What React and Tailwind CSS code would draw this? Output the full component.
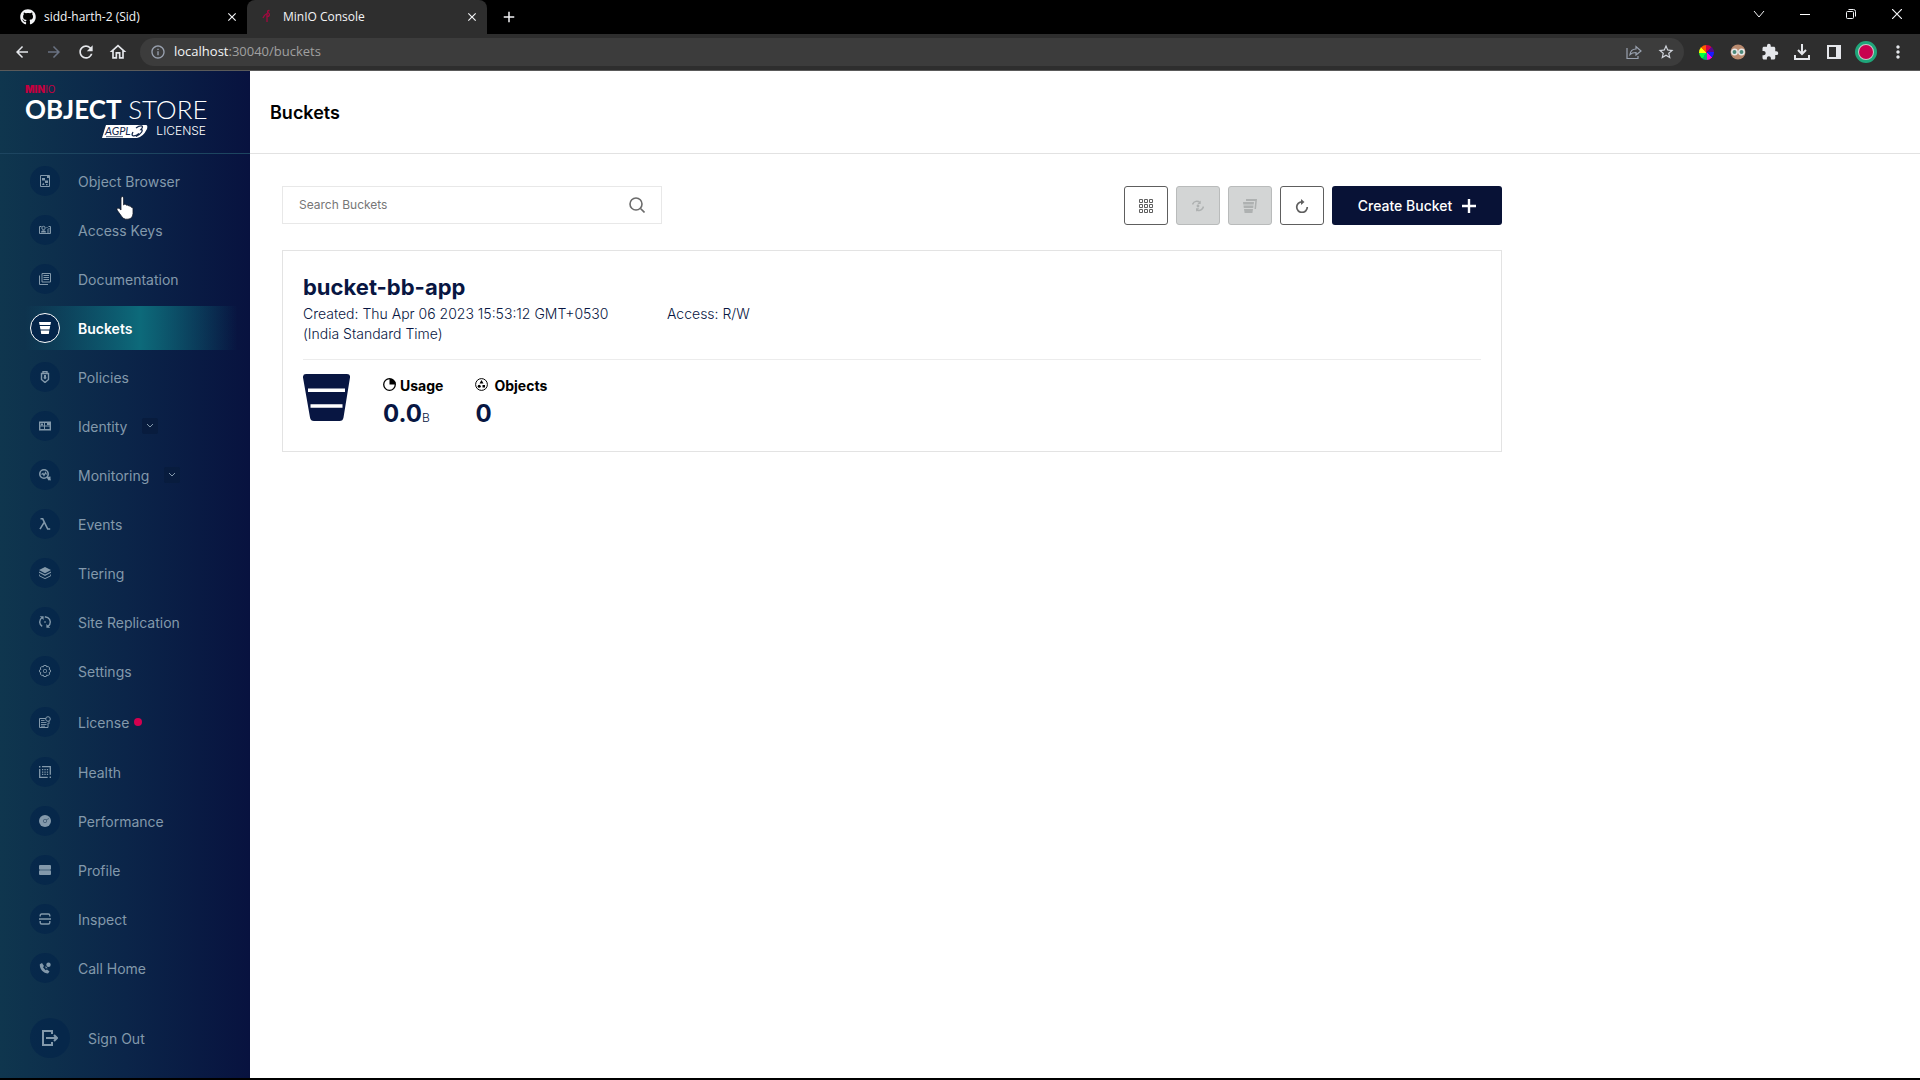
import clsx from 'clsx'
import { FaGithub } from 'react-icons/fa'
import {
  MdArrowBack,
  MdArrowForward,
  MdRefresh,
  MdOutlineHome,
  MdOutlineInfo,
  MdStarBorder,
  MdExtension,
  MdMoreVert,
  MdClose,
  MdAdd,
} from 'react-icons/md'

const navItems = [
  { label: 'Object Browser', icon: 'browser' },
  { label: 'Access Keys', icon: 'keys' },
  { label: 'Documentation', icon: 'docs' },
  { label: 'Buckets', icon: 'bucket', active: true },
  { label: 'Policies', icon: 'policy' },
  { label: 'Identity', icon: 'identity', expandable: true },
  { label: 'Monitoring', icon: 'monitoring', expandable: true },
  { label: 'Events', icon: 'lambda' },
  { label: 'Tiering', icon: 'tiers' },
  { label: 'Site Replication', icon: 'replication' },
  { label: 'Settings', icon: 'settings' },
  { label: 'License', icon: 'license', badge: true },
  { label: 'Health', icon: 'health' },
  { label: 'Performance', icon: 'performance' },
  { label: 'Profile', icon: 'profile' },
  { label: 'Inspect', icon: 'inspect' },
  { label: 'Call Home', icon: 'call' },
]

// all nav glyphs are drawn on a 12x12 grid
const glyphs = {
  browser: (
    <>
      <path d="M1.500.5h9v11h-9z" fill="none" stroke="currentColor" />
      <path d="M3 3h3v2.500H3zM8 1h2v2H8zM6 5.500h3v2.500H6zM3 10l1.300-2.500L5.600 10zM7 9h1.500v1.200H7z" />
    </>
  ),
  keys: (
    <>
      <path d="M2.500 2.500h-2v7h11v-7h-2" fill="none" stroke="currentColor" />
      <circle cx="4.500" cy="4" r="1.700" fill="none" stroke="currentColor" />
      <path d="M2 8.500c0-3 5-3 5 0zM7.500 3h1v1h-1zM9.500 4h1v1h-1zM8 5.500h2.500v1H8zM8 7.500h2.500v1H8z" />
    </>
  ),
  docs: (
    <>
      <path d="M3 .5h8.500v8.500H3zM.5 2.500v9H9" fill="none" stroke="currentColor" />
      <path d="M4.500 2.500h5.500M4.500 4.500h5.500M4.500 6.500h5.500" stroke="currentColor" />
    </>
  ),
  bucket: <path d="M0 0h12l-.6 3H.6zM.8 4h10.400l-.7 3.500H1.500zM1.700 8.500h8.600L9.800 12H2.200z" />,
  policy: (
    <>
      <path d="M4 2V.6h4V2M2.500 2.500h7v6L6 11.500 2.500 8.500z" fill="none" stroke="currentColor" strokeWidth="1.400" />
      <path d="M5 4h2v1.500l.5 1.500L6 8.500 4.500 7 5 5.500z" />
    </>
  ),
  identity: (
    <>
      <path d="M.7 2.200h10.600v7.600H.7z" fill="none" stroke="currentColor" strokeWidth="1.400" />
      <path d="M5.500 2v8M6 6h5M1 6h4" stroke="currentColor" />
      <path d="M2 3.500h2v2H2zM8 3h3v2H8z" />
    </>
  ),
  monitoring: (
    <>
      <circle cx="5" cy="5" r="4.200" fill="none" stroke="currentColor" strokeWidth="1.600" />
      <path d="M2.500 5.500l1.500-1 1 2 1.500-3 1 2M8 8l3.500 3.200" fill="none" stroke="currentColor" strokeWidth="1.200" />
      <path d="M7.500 8l4-.5v3l-2 1z" />
    </>
  ),
  lambda: (
    <path d="M1.500.8h2.200l5 10.200h2.500M5.300 4.200L1 11.200" fill="none" stroke="currentColor" strokeWidth="1.600" />
  ),
  tiers: (
    <>
      <path d="M6 0l6 3-6 3.200L0 3zM0 4.500l6 3 6-3v1.300L6 9 0 5.800z" />
      <path d="M.3 7.500v1.300L6 11.600l5.700-2.800V7.500" fill="none" stroke="currentColor" />
    </>
  ),
  replication: (
    <>
      <path d="M2.800 1.800a5.200 5.200 0 0 0 .4 8.600M9.200 10.200a5.200 5.200 0 0 0-.4-8.600L5.800.8" fill="none" stroke="currentColor" strokeWidth="1.400" />
      <path d="M.8.3h3.800v3.800zM11.200 11.700H7.400V7.900zM5.300 5.300h1.400v1.400H5.300z" />
    </>
  ),
  settings: (
    <>
      <path
        d="M4.800.5h2.400l.5 1.400 1.500-.5 1.500 1.600-.6 1.400 1.400.7v1.800l-1.400.7.6 1.400-1.500 1.600-1.500-.5-.5 1.400H4.800l-.5-1.400-1.500.5L1.300 9l.6-1.400L.5 6.900V5.100l1.400-.7L1.300 3l1.500-1.600 1.500.5z"
        fill="none"
        stroke="currentColor"
      />
      <rect x="4.500" y="4.500" width="3" height="3" rx="1" fill="none" stroke="currentColor" />
    </>
  ),
  license: (
    <>
      <path d="M7 2.500H.5v9h8.500V7" fill="none" stroke="currentColor" />
      <circle cx="9" cy="3" r="2.300" fill="none" stroke="currentColor" />
      <path d="M2 4.500h3.500M2 6.500h5.500M2 8.500h5.500M2 10.200h4M10 5v3" stroke="currentColor" strokeWidth=".9" />
    </>
  ),
  health: (
    <>
      <path d="M3 .7h8.300v8M.7 3v8.300h8" fill="none" stroke="currentColor" strokeWidth="1.300" />
      <path d="M0 0h1.400v1.400H0zM10.600 10.600H12V12h-1.400zM3 3h1.300v1.300H3zM5.400 3h1.300v1.300H5.400zM7.800 3h1.300v1.300H7.800zM3 5.400h1.300v1.300H3zM5.400 5.400h1.300v1.300H5.400zM7.800 5.400h1.300v1.300H7.800zM3 7.800h1.300v1.300H3zM5.400 7.800h1.300v1.300H5.400zM7.800 7.800h1.300v1.300H7.800z" />
    </>
  ),
  performance: (
    <>
      <circle cx="6" cy="6" r="6" />
      <circle cx="6" cy="6" r="1.700" fill="none" stroke="#3d5870" strokeWidth=".8" />
      <path d="M7 5l3-1.500" stroke="#3d5870" strokeWidth=".8" />
    </>
  ),
  profile: (
    <>
      <rect y="1" width="12" height="4.700" rx="1" />
      <rect y="6.300" width="12" height="4.700" rx="1" />
    </>
  ),
  inspect: (
    <path d="M1.200 3.500v-1q0-1.500 1.500-1.500h6.600q1.500 0 1.500 1.500v1M0 6h12M1.200 8v1.500q0 1.500 1.500 1.500h6.600q1.500 0 1.500-1.500V8" fill="none" stroke="currentColor" strokeWidth="1.400" />
  ),
  call: (
    <>
      <path d="M.8 2.200L3 1l2 3-1 1.200 2.500 3L8 7.500l2.500 2-1.500 2C4.500 11.500.5 7 .8 2.200z" />
      <circle cx="9.500" cy="2.700" r="2.200" />
      <path d="M6.500 6.200V4l2.200 2.200z" />
    </>
  ),
}

function Glyph({ name }) {
  return (
    <svg className="size-3" viewBox="0 0 12 12" fill="currentColor" aria-hidden="true">
      {glyphs[name]}
    </svg>
  )
}

function IconButton({ label, className, children }) {
  return (
    <button aria-label={label} className={clsx('flex h-8 w-8 shrink-0 items-center justify-center', className)}>
      {children}
    </button>
  )
}

function TabBar() {
  return (
    <div className="flex h-[34px] items-stretch bg-black text-xs text-gray-100">
      <div className="flex w-[247px] items-center pr-1 pl-5">
        <FaGithub className="size-4" />
        <span className="flex-1 pl-2">sidd-harth-2 (Sid)</span>
        <button aria-label="Close tab" className="p-1">
          <MdClose className="size-3.5" />
        </button>
      </div>
      <div className="flex w-[240px] items-center rounded-t-lg bg-[#2e2e2e] pr-1 pl-3">
        <svg className="size-4" viewBox="0 0 16 16" fill="none" stroke="#a3093f" strokeWidth="1.300" aria-hidden="true">
          <path d="M4 9c1-3 3-4 4-4.500V13M8 8c3-1 3-3 1.500-4S8 1.500 10.500 1.500" />
        </svg>
        <span className="flex-1 pl-2">MinIO Console</span>
        <button aria-label="Close tab" className="p-1">
          <MdClose className="size-3.5" />
        </button>
      </div>
      <button aria-label="New tab" className="flex w-11 items-center justify-center">
        <MdAdd className="size-[18px]" />
      </button>
      <div className="ml-auto flex h-7 items-center">
        <button aria-label="Search tabs" className="flex w-[46px] justify-center">
          <svg className="size-3" viewBox="0 0 12 12" fill="none" stroke="currentColor" aria-hidden="true">
            <path d="M1 3l5 6 5-6" />
          </svg>
        </button>
        <button aria-label="Minimize" className="flex w-[46px] justify-center">
          <span className="h-px w-2.5 bg-white" />
        </button>
        <button aria-label="Restore" className="flex w-[46px] justify-center">
          <svg className="size-2.5" viewBox="0 0 10 10" fill="none" stroke="currentColor" aria-hidden="true">
            <rect x=".5" y="2.500" width="7" height="7" rx="1" />
            <path d="M2.500.5h5q2 0 2 2v5" />
          </svg>
        </button>
        <button aria-label="Close window" className="flex w-[46px] justify-center">
          <svg className="size-2.5" viewBox="0 0 10 10" fill="none" stroke="currentColor" strokeWidth="1.200" aria-hidden="true">
            <path d="M0 0l10 10M10 0L0 10" />
          </svg>
        </button>
      </div>
    </div>
  )
}

function Toolbar() {
  return (
    <div className="flex h-[37px] items-center border-b border-[#5a5a5a] bg-[#2e2e2e] px-1.5 text-gray-200">
      <IconButton label="Back"><MdArrowBack className="size-[18px]" /></IconButton>
      <IconButton label="Forward" className="text-gray-500"><MdArrowForward className="size-[18px]" /></IconButton>
      <IconButton label="Reload"><MdRefresh className="size-5" /></IconButton>
      <IconButton label="Home"><MdOutlineHome className="size-5" /></IconButton>
      <div className="mx-1.5 flex h-7 flex-1 items-center rounded-full bg-[#3c3c3c] pr-0.5 pl-2.5">
        <MdOutlineInfo className="size-4 text-gray-400" />
        <p className="flex-1 pl-2 text-[13px] text-[#a0a0a0]">
          <span className="text-gray-100">localhost</span>:30040/buckets
        </p>
        <IconButton label="Share" className="text-gray-400">
          <svg className="size-4" viewBox="0 0 16 16" fill="none" stroke="currentColor" strokeWidth="1.200" aria-hidden="true">
            <path d="M1 4v10.500h11V12M4 10.500c.5-4 3-5.500 6-5.500V2.500L15 7l-5 4V8.500c-2.500 0-4.500.5-6 2z" />
          </svg>
        </IconButton>
        <IconButton label="Bookmark this page" className="text-gray-300"><MdStarBorder className="size-[18px]" /></IconButton>
      </div>
      <IconButton label="Color picker">
        <span className="size-[15px] rounded-full bg-[conic-gradient(#d0004a_0deg_40deg,#5a0a8c_40deg_85deg,#1a1aff_85deg_130deg,#ff00e0_130deg_175deg,#00b86b_175deg_215deg,#00ff40_215deg_265deg,#f7ff00_265deg_310deg,#ff5a00_310deg_360deg)]" />
      </IconButton>
      <IconButton label="Reader extension">
        <svg className="size-4" viewBox="0 0 16 16" aria-hidden="true">
          <circle cx="8" cy="8" r="7.500" fill="#b98a6e" />
          <circle cx="4.500" cy="8" r="2.700" fill="#4c8a7b" stroke="#e8e8e8" strokeWidth="1.500" />
          <circle cx="11.500" cy="8" r="2.700" fill="#4c8a7b" stroke="#e8e8e8" strokeWidth="1.500" />
        </svg>
      </IconButton>
      <IconButton label="Extensions"><MdExtension className="size-[18px]" /></IconButton>
      <IconButton label="Downloads">
        <svg className="size-4" viewBox="0 0 16 16" fill="none" stroke="currentColor" strokeWidth="2" aria-hidden="true">
          <path d="M8 0v10M4 6l4 4 4-4M1 11v4h14v-4" />
        </svg>
      </IconButton>
      <IconButton label="Side panel">
        <svg className="size-3.5" viewBox="0 0 14 14" fill="none" stroke="currentColor" strokeWidth="2" aria-hidden="true">
          <path d="M1 1h12v12H1z" />
          <path d="M11 1v12" strokeWidth="4" />
        </svg>
      </IconButton>
      <IconButton label="Profile">
        <span className="size-[22px] rounded-full border-3 border-[#1fa67a] bg-[#c9c9c9] p-px">
          <span className="block size-full rounded-full bg-[#c8004f]" />
        </span>
      </IconButton>
      <IconButton label="Menu"><MdMoreVert className="size-5" /></IconButton>
    </div>
  )
}

function Logo() {
  return (
    <div className="flex h-[83px] flex-col border-b border-[#1d4560] pt-3 pl-[25px] font-[Lato,sans-serif] text-white">
      <p className="font-[Inter,sans-serif] text-[10px] leading-3 text-[#c3003f]">
        <span className="font-black">MIN</span>IO
      </p>
      <p className="text-[26px] leading-7">
        <span className="font-bold">OBJECT</span> <span className="font-light">STORE</span>
      </p>
      <div className="flex w-[181px] items-center justify-end gap-2">
        <svg className="h-[15px] w-[46px]" viewBox="0 0 46 15" aria-hidden="true">
          <path d="M4 1h40q2 0 1 4-4 8-10 9H0z" fill="#fff" />
          <text x="3" y="11" fontSize="11" fontStyle="italic" fontFamily="Lato, sans-serif" fill="#14284b">AGPL</text>
          <path d="M4 12.700h17" stroke="#14284b" strokeWidth=".8" />
          <path d="M31 8c-3 5 2 5 6 1.500M34 4c4-3 9-3 5 1.500 3 0 0 5-5 7" stroke="#14284b" strokeWidth="1.300" fill="none" />
        </svg>
        <span className="font-[Inter,sans-serif] text-xs font-light">LICENSE</span>
      </div>
    </div>
  )
}

function NavItem({ item }) {
  return (
    <li>
      <a
        href="#"
        className={clsx(
          'flex items-center pl-[30px]',
          item.badge ? 'h-[47px]' : 'h-11',
          item.active
            ? 'bg-linear-to-r from-transparent from-10% via-[#0d6a7a] via-56% to-transparent to-95% font-semibold text-white'
            : 'text-[#8399ab]',
        )}
      >
        <span
          className={clsx(
            'flex size-[30px] items-center justify-center rounded-full',
            item.active ? 'border border-white bg-[#04254a]' : 'bg-[#04254a]/70',
          )}
        >
          <Glyph name={item.icon} />
        </span>
        <span className="pt-0.5 pl-[18px]">{item.label}</span>
        {item.badge && <span className="ml-[5px] size-2 rounded-full bg-[#d4004f]" />}
        {item.expandable && (
          <span className="ml-[15px] flex size-4 items-center justify-center rounded-xs bg-[#081c3e]">
            <svg className="size-2" viewBox="0 0 8 8" fill="none" stroke="currentColor" aria-hidden="true">
              <path d="M1 2l3 3 3-3" />
            </svg>
          </span>
        )}
      </a>
    </li>
  )
}

function Sidebar() {
  return (
    <aside className="relative flex w-[250px] shrink-0 flex-col bg-linear-to-r from-[#0f364e] via-[#0b2549] to-[#08123f] text-sm">
      <Logo />
      <nav>
        <ul className="flex flex-col gap-[5px] pt-[5px]">
          {navItems.map((item) => (
            <NavItem key={item.label} item={item} />
          ))}
        </ul>
      </nav>
      <a href="#" className="mt-7 mb-5 flex items-center pl-[30px] text-[#8399ab]">
        <span className="flex size-10 items-center justify-center rounded-full bg-[#04254a]/70">
          <svg className="size-4" viewBox="0 0 16 16" fill="none" stroke="currentColor" strokeWidth="2" aria-hidden="true">
            <path d="M10 4V1H1v14h9v-3M4 8h11M12 5l3 3-3 3" />
          </svg>
        </span>
        <span className="pt-0.5 pl-[18px]">Sign Out</span>
      </a>
      <svg className="absolute top-[125px] left-[116px] h-6 w-[18px]" viewBox="0 0 18 24" fill="#fff" stroke="#111827" strokeWidth=".8" aria-hidden="true">
        <path d="M5 2q0-1.500 1.300-1.500T7.600 2v7l1-.8q1.500-.3 1.800 1 1.800-.8 2.300.8 2-.6 2.500 1.200 1.700-.3 1.800 1.500v5q-.5 5-5 5.500H9.500q-2.500-.3-4-3L1 14q-.6-2 1-2 1.200.2 3 2z" />
      </svg>
    </aside>
  )
}

function ActionButton({ label, disabled, children }) {
  return (
    <button
      aria-label={label}
      disabled={disabled}
      className="flex w-11 items-center justify-center rounded-[3px] border border-[#5e5e5e] text-[#5e5e5e] disabled:border-[#b9bbbb] disabled:bg-[#d3d5d5] disabled:text-[#aeb1b1]"
    >
      {children}
    </button>
  )
}

function BucketActions() {
  return (
    <div className="flex h-[39px] gap-2">
      <ActionButton label="Select multiple">
        <svg className="size-3.5" viewBox="0 0 14 14" fill="none" stroke="currentColor" aria-hidden="true">
          <path d="M.5.5h3v3h-3zM5.500.5h3v3h-3zM10.500.5h3v3h-3zM.5 5.500h3v3h-3zM5.500 5.500h3v3h-3zM10.500 5.500h3v3h-3zM.5 10.500h3v3h-3zM5.500 10.500h3v3h-3zM10.500 10.500h3v3h-3z" />
        </svg>
      </ActionButton>
      <ActionButton label="Set lifecycle" disabled>
        <svg className="size-3" viewBox="0 0 12 12" fill="none" stroke="currentColor" strokeWidth="1.500" aria-hidden="true">
          <path d="M.5 4.500C2 .8 5.500.5 8 2.500M11.500 6.500c-.8 3-3.500 5-6.500 3.500" />
          <circle cx="6" cy="6" r="1.400" fill="currentColor" stroke="none" />
          <path d="M8.700.5v3.600H5.500zM4 11.800V8.200h3.200z" fill="currentColor" stroke="none" />
        </svg>
      </ActionButton>
      <ActionButton label="Set replication" disabled>
        <svg className="size-3.5" viewBox="0 0 14 14" fill="currentColor" aria-hidden="true">
          <path d="M3 0h11l-1 10h-1.500L12.300 2H3zM0 3h11l-.3 2.500H.3zM.5 6.500h10l-.3 2.500H.8zM1 10h9l-.6 4H1.600z" />
        </svg>
      </ActionButton>
      <ActionButton label="Refresh">
        <svg className="size-3.5" viewBox="0 0 14 14" fill="none" stroke="currentColor" strokeWidth="1.700" aria-hidden="true">
          <path d="M7 2.800a5.300 5.300 0 1 0 5.300 5.300" />
          <path d="M6 0l3.500 3L6 6z" fill="currentColor" stroke="none" />
        </svg>
      </ActionButton>
      <button className="flex w-[170px] items-center justify-center gap-2.5 rounded-[3px] bg-[#081236] pt-px text-sm font-medium text-white">
        Create Bucket
        <svg className="size-3.5" viewBox="0 0 14 14" stroke="currentColor" strokeWidth="2.400" aria-hidden="true">
          <path d="M7 0v14M0 7h14" />
        </svg>
      </button>
    </div>
  )
}

function BucketCard() {
  return (
    <article className="mt-[25px] h-[202px] border border-[#e3e3e3] px-5 pt-[22px]">
      <h2 className="text-[22px] leading-7 font-bold">
        <a href="#">bucket-bb-app</a>
      </h2>
      <div className="flex border-b border-[#ececec] pt-[3px] pb-[15px] text-sm leading-5 font-light">
        <p className="w-[364px] pr-12">Created: Thu Apr 06 2023 15:53:12 GMT+0530 (India Standard Time)</p>
        <p>Access: R/W</p>
      </div>
      <div className="flex pt-3.5">
        <svg className="mr-[33px] size-[47px]" viewBox="0 0 47 47" aria-hidden="true">
          <path d="M3 0h41q3.500 0 3 3.500l-6.500 40q-.6 3.500-4 3.500H11q-3.400 0-4-3.500L0 3.500Q-.3 0 3 0z" fill="#081642" />
          <path d="M5 16.200h37M7.500 32h32" stroke="#fff" strokeWidth="3.400" />
        </svg>
        <dl className="flex gap-8">
          <div>
            <dt className="flex gap-1 text-sm leading-6 font-bold text-black">
              <svg className="mt-1 size-[13px]" viewBox="0 0 13 13" aria-hidden="true">
                <circle cx="6.500" cy="6.500" r="5.800" fill="none" stroke="currentColor" strokeWidth="1.300" />
                <path d="M6.500 6.500V1h3l3 3v2.500z" fill="currentColor" />
              </svg>
              Usage
            </dt>
            <dd className="text-2xl font-bold">
              0.0<span className="text-xs font-light">B</span>
            </dd>
          </div>
          <div>
            <dt className="flex gap-1.5 text-sm leading-6 font-bold text-black">
              <svg className="mt-1 size-[13px]" viewBox="0 0 13 13" fill="currentColor" aria-hidden="true">
                <circle cx="6.500" cy="6.500" r="5.900" fill="none" stroke="currentColor" />
                <path d="M6.500 2l2 3.500h-4zM7.500 7H10v2.500H7.500z" />
                <circle cx="4.200" cy="8.200" r="1.500" />
              </svg>
              Objects
            </dt>
            <dd className="text-2xl font-bold">0</dd>
          </div>
        </dl>
      </div>
    </article>
  )
}

export default function App() {
  return (
    <div className="flex min-h-screen flex-col bg-black">
      <header className="font-['Open_Sans',sans-serif]">
        <TabBar />
        <Toolbar />
      </header>
      <div className="mb-0.5 flex flex-1 bg-white font-[Inter,sans-serif] text-[#081642]">
        <Sidebar />
        <main className="flex-1">
          <div className="flex h-[83px] items-center border-b border-[#e2e2e2] px-5 pt-0.5">
            <h1 className="text-lg font-semibold text-black">Buckets</h1>
          </div>
          <div className="max-w-[1284px] px-8 pt-8">
            <div className="flex items-start justify-between">
              <label className="flex h-[38px] w-[380px] items-center border border-[#e8e8e8] pr-4 pl-4">
                <input
                  type="search"
                  aria-label="Search Buckets"
                  placeholder="Search Buckets"
                  className="flex-1 text-xs outline-none placeholder:text-[#767676]"
                />
                <svg className="size-4" viewBox="0 0 16 16" fill="none" stroke="#6b6b6b" strokeWidth="1.600" aria-hidden="true">
                  <circle cx="7" cy="7" r="6" />
                  <path d="M11.500 11.500L15.500 15.500" />
                </svg>
              </label>
              <BucketActions />
            </div>
            <BucketCard />
          </div>
        </main>
      </div>
    </div>
  )
}
